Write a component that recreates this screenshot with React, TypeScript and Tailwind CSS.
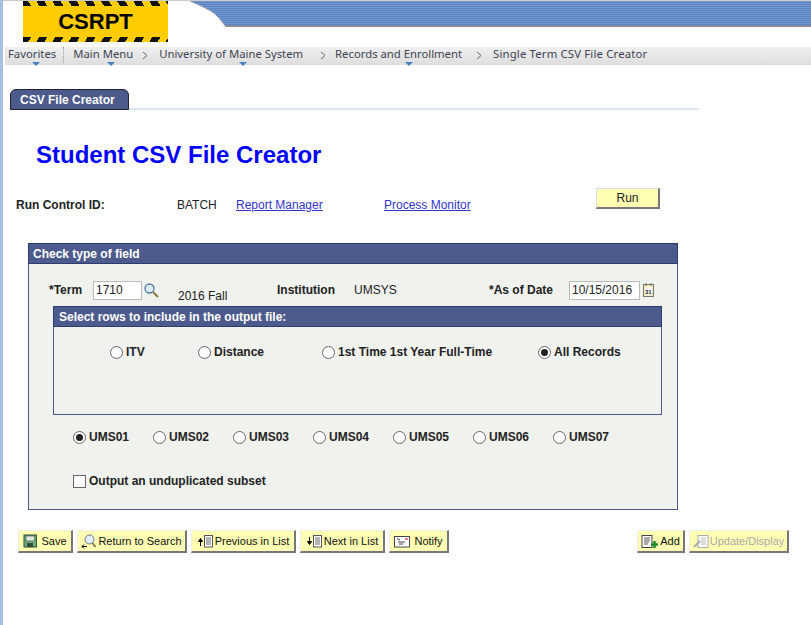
import type { ReactNode } from "react";

const font = "font-['Liberation_Sans',Arial,sans-serif]";

function Crumb({ label, arrowClass, menu, className }: { label: string; arrowClass?: string; menu?: boolean; className: string }) {
  return (
    <div className={`relative flex items-center whitespace-nowrap ${className}`}>
      <span>{label}</span>
      {menu && (
        <span className="absolute left-[calc(50%-4px)] bottom-[-5px] w-0 h-0 border-x-[4px] border-x-transparent border-t-[4px] border-t-[#4a7fc0]" />
      )}
      {arrowClass && (
        <svg width="6" height="9" viewBox="0 0 6 9" className={`mt-[2px] ${arrowClass}`}>
          <path d="M1 1l4 3.5L1 8" fill="none" stroke="#666" />
        </svg>
      )}
    </div>
  );
}

function Radio({ label, checked, className = "" }: { label: string; checked?: boolean; className?: string }) {
  return (
    <label className={`flex items-center gap-[3px] font-bold text-[12px] text-[#222] whitespace-nowrap ${className}`}>
      <span className="w-[13px] h-[13px] rounded-full border border-[#666] bg-white flex items-center justify-center">
        {checked && <span className="w-[7px] h-[7px] rounded-full bg-[#222]" />}
      </span>
      {label}
    </label>
  );
}

function PageButton({ icon, label, width, disabled }: { icon: ReactNode; label: string; width: string; disabled?: boolean }) {
  return (
    <button
      className={`h-[23px] ${width} flex items-center justify-center gap-[1px] bg-[#ffffb4] border border-t-[#eee] border-l-[#eee] border-r-2 border-b-2 border-r-[#777] border-b-[#777] text-[11px] whitespace-nowrap ${
        disabled ? "text-[#aaa]" : "text-[#111]"
      }`}
    >
      {icon}
      {label}
    </button>
  );
}

function SaveIcon() {
  return (
    <svg width="15" height="14" viewBox="0 0 15 14" className="mr-[2px]">
      <rect x="1" y="1" width="12.5" height="12" fill="#6fae7c" stroke="#2f4a38" />
      <rect x="3" y="2" width="8.5" height="5" fill="#dfeadf" stroke="#2f4a38" strokeWidth=".6" />
      <rect x="4" y="9" width="6" height="4" fill="#2f4a38" />
    </svg>
  );
}

function ReturnIcon() {
  return (
    <svg width="15" height="15" viewBox="0 0 15 15" className="mr-[1px]">
      <circle cx="8.5" cy="5.5" r="4.5" fill="#e4eef8" stroke="#667788" />
      <path d="M11.5 9l3 4" stroke="#8a7a4a" strokeWidth="2" />
      <path d="M6 12.5H1M3 10.5l-2 2 2 2" stroke="#000" fill="none" />
    </svg>
  );
}

function ListIcon({ dir }: { dir: "up" | "down" }) {
  return (
    <svg width="17" height="14" viewBox="0 0 17 14">
      {dir === "up" ? (
        <path d="M3.5 12V6M1.5 7.5l2-3 2 3z" stroke="#000" fill="#000" />
      ) : (
        <path d="M3.5 3v6M1.5 7.5l2 3 2-3z" stroke="#000" fill="#000" />
      )}
      <rect x="7.5" y="1.5" width="8" height="11.5" fill="#fff" stroke="#555" />
      <path d="M9 4h5M9 6h5M9 8h5M9 10h5" stroke="#666" />
    </svg>
  );
}

function NotifyIcon() {
  return (
    <svg width="16" height="13" viewBox="0 0 16 13" className="mr-[3px]">
      <rect x="0.5" y="1.5" width="15" height="10.5" fill="#fff" stroke="#444" />
      <path d="M3 3.5l3 1.5M4 7h7M5 9h4" stroke="#444" />
      <rect x="11.5" y="3" width="2" height="2" fill="#d44" />
    </svg>
  );
}

function AddIcon() {
  return (
    <svg width="18" height="15" viewBox="0 0 18 15">
      <rect x="1" y="1.5" width="10" height="12" fill="#fff" stroke="#444" />
      <path d="M3 4h6M3 6h6M3 8h5M3 10h4" stroke="#555" />
      <path d="M13.5 7v7M10 10.5h7" stroke="#1a8a2a" strokeWidth="2.4" />
    </svg>
  );
}

function UpdateIcon() {
  return (
    <svg width="16" height="15" viewBox="0 0 16 15">
      <rect x="5" y="1.5" width="10" height="12" fill="#fff" stroke="#aaa" />
      <path d="M8 4h5M8 6h5M8 8h5M8 10h5" stroke="#bbb" />
      <path d="M1 13l6-6" stroke="#aaa" strokeWidth="2" />
    </svg>
  );
}

export default function App() {
  return (
    <div className={`${font} w-[811px] h-[625px] overflow-hidden bg-white border-l-[3px] border-l-[#a9bfdf] text-[12px] text-[#222]`}>
      {/* Header */}
      <div className="flex h-[47px] items-start border-t border-t-[#ccc]">
        <div className="relative ml-[20px] w-[145px] h-[41px] bg-[#ffcc00] flex items-center justify-center overflow-hidden text-[22px] font-bold text-black">
          <span className="absolute inset-x-0 top-0 h-[5px] bg-[repeating-linear-gradient(60deg,#111_0px,#111_7px,#ffcc00_7px,#ffcc00_14px)]" />
          <span className="absolute inset-x-0 bottom-0 h-[5px] bg-[repeating-linear-gradient(120deg,#111_0px,#111_7px,#ffcc00_7px,#ffcc00_14px)]" />
          CSRPT
        </div>
        <div className="relative ml-[22px] flex-1 h-[26px] border-b-2 border-b-[#8a8a98] bg-[repeating-linear-gradient(180deg,#7398cf_0px,#7398cf_1px,#5c84c1_1px,#5c84c1_2px)]">
          <svg width="36" height="26" viewBox="0 0 36 26" className="absolute left-0 top-0">
            <path d="M0 0V26H36C30 18 26 12 17 8C10 4 4 2 0 0Z" fill="#fff" />
            <path d="M36 26C30 18 26 12 17 8C10 4 4 2 0 0" fill="none" stroke="#9a9aa8" />
          </svg>
        </div>
      </div>

      {/* Breadcrumbs */}
      <div className="ml-[2px] h-[18px] flex items-start bg-gradient-to-b from-[#efefef] to-[#dedede] text-[#3c4452] font-['Noto_Sans',sans-serif] text-[11.3px] leading-[14px]">
        <Crumb label="Favorites" menu className="ml-[3px] pr-[7px]" />
        <span className="h-[16px] border-l border-dotted border-l-[#999]" />
        <Crumb label="Main Menu" menu arrowClass="ml-[9px]" className="ml-[9px]" />
        <Crumb label="University of Maine System" menu arrowClass="ml-[17px]" className="ml-[11px]" />
        <Crumb label="Records and Enrollment" menu arrowClass="ml-[14px]" className="ml-[9px]" />
        <Crumb label="Single Term CSV File Creator" className="ml-[11px] tracking-[0.18px]" />
      </div>

      {/* Tabs */}
      <div className="mt-[24px] ml-[7px] w-[689px] h-[21px] border-b-2 border-b-[#dce5f5]">
        <div className="w-[119px] h-[21px] bg-[#4c5a8c] border border-[#223] rounded-t-[6px] rounded-br-none text-white font-bold flex items-center pl-[9px] text-[12px]">
          CSV File Creator
        </div>
      </div>

      {/* Title */}
      <h1 className="mt-[31px] ml-[33px] h-[28px] leading-[28px] text-[24px] font-bold text-[#0000ff]">Student CSV File Creator</h1>

      {/* Run control */}
      <div className="mt-[24px] ml-[13px] h-[24px] flex items-center relative">
        <span className="w-[161px] font-bold">Run Control ID:</span>
        <span className="w-[59px]">BATCH</span>
        <a className="w-[148px] text-[#3333cc] underline">Report Manager</a>
        <a className="w-[212px] text-[#3333cc] underline">Process Monitor</a>
        <button className="w-[64px] h-[21px] mb-[13px] bg-[#ffffb4] border border-t-[#ddd] border-l-[#ddd] border-r-2 border-b-2 border-r-[#777] border-b-[#777] text-[12px] text-[#222]">
          Run
        </button>
      </div>

      {/* Main group box */}
      <div className="mt-[26px] ml-[25px] w-[650px] h-[267px] border-x border-b border-[#4c5a8c] bg-[#f0f2ee]">
        <div className="h-[21px] -mx-px bg-[#4c5a8c] border border-[#2f3c70] text-white font-bold flex items-center pl-[4px]">Check type of field</div>

        <div className="mt-[16px] h-[20px] flex items-center font-bold">
          <span className="ml-[20px] w-[44px]">*Term</span>
          <span className="w-[49px] h-[19px] bg-white border border-[#bbb] font-normal pl-[2px] flex items-center">1710</span>
          <svg width="16" height="16" viewBox="0 0 16 16" className="ml-[1px]">
            <circle cx="6.5" cy="6.5" r="4.5" fill="#dcebf8" stroke="#56789a" strokeWidth="1.3" />
            <path d="M10 10l5 5" stroke="#8b7a3a" strokeWidth="2" />
          </svg>
          <span className="ml-[19px] mt-[11px] w-[99px] font-normal">2016 Fall</span>
          <span className="w-[77px]">Institution</span>
          <span className="w-[135px] font-normal">UMSYS</span>
          <span className="w-[80px]">*As of Date</span>
          <span className="w-[71px] h-[19px] bg-white border border-[#bbb] font-normal pl-[2px] flex items-center">10/15/2016</span>
          <svg width="14" height="17" viewBox="0 0 14 17" className="ml-[2px]">
            <rect x="1.5" y="2.5" width="10" height="12" fill="#f3e9c4" stroke="#776" />
            <path d="M4 1v3M9 1v3" stroke="#776" />
            <rect x="3" y="5.5" width="7" height="7" fill="#fff" />
            <text x="3" y="11.5" fontSize="6" fontWeight="bold" fill="#222">31</text>
          </svg>
        </div>

        {/* Select rows box */}
        <div className="mt-[6px] ml-[24px] w-[609px] h-[109px] border-x border-b border-[#4c5a8c]">
          <div className="h-[21px] -mx-px bg-[#4c5a8c] border border-[#2f3c70] text-white font-bold flex items-center pl-[5px]">Select rows to include in the output file:</div>
          <div className="mt-[16px] flex items-center">
            <Radio label="ITV" className="ml-[56px] w-[88px]" />
            <Radio label="Distance" className="w-[124px]" />
            <Radio label="1st Time 1st Year Full-Time" className="w-[216px]" />
            <Radio label="All Records" checked />
          </div>
        </div>

        {/* Campus radios */}
        <div className="mt-[13px] ml-[44px] grid grid-cols-[repeat(7,80px)]">
          <Radio label="UMS01" checked />
          <Radio label="UMS02" />
          <Radio label="UMS03" />
          <Radio label="UMS04" />
          <Radio label="UMS05" />
          <Radio label="UMS06" />
          <Radio label="UMS07" />
        </div>

        <label className="mt-[26px] ml-[44px] flex items-center gap-[3px] font-bold">
          <span className="w-[13px] h-[13px] bg-white border border-[#666]" />
          Output an unduplicated subset
        </label>
      </div>

      {/* Bottom buttons */}
      <div className="mt-[20px] ml-[15px] w-[771px] flex gap-[4px]">
        <PageButton icon={<SaveIcon />} label="Save" width="w-[55px]" />
        <PageButton icon={<ReturnIcon />} label="Return to Search" width="w-[110px]" />
        <PageButton icon={<ListIcon dir="up" />} label="Previous in List" width="w-[105px]" />
        <PageButton icon={<ListIcon dir="down" />} label="Next in List" width="w-[85px]" />
        <PageButton icon={<NotifyIcon />} label="Notify" width="w-[60px]" />
        <div className="flex-1" />
        <PageButton icon={<AddIcon />} label="Add" width="w-[48px]" />
        <PageButton icon={<UpdateIcon />} label="Update/Display" width="w-[100px]" disabled />
      </div>
    </div>
  );
}
